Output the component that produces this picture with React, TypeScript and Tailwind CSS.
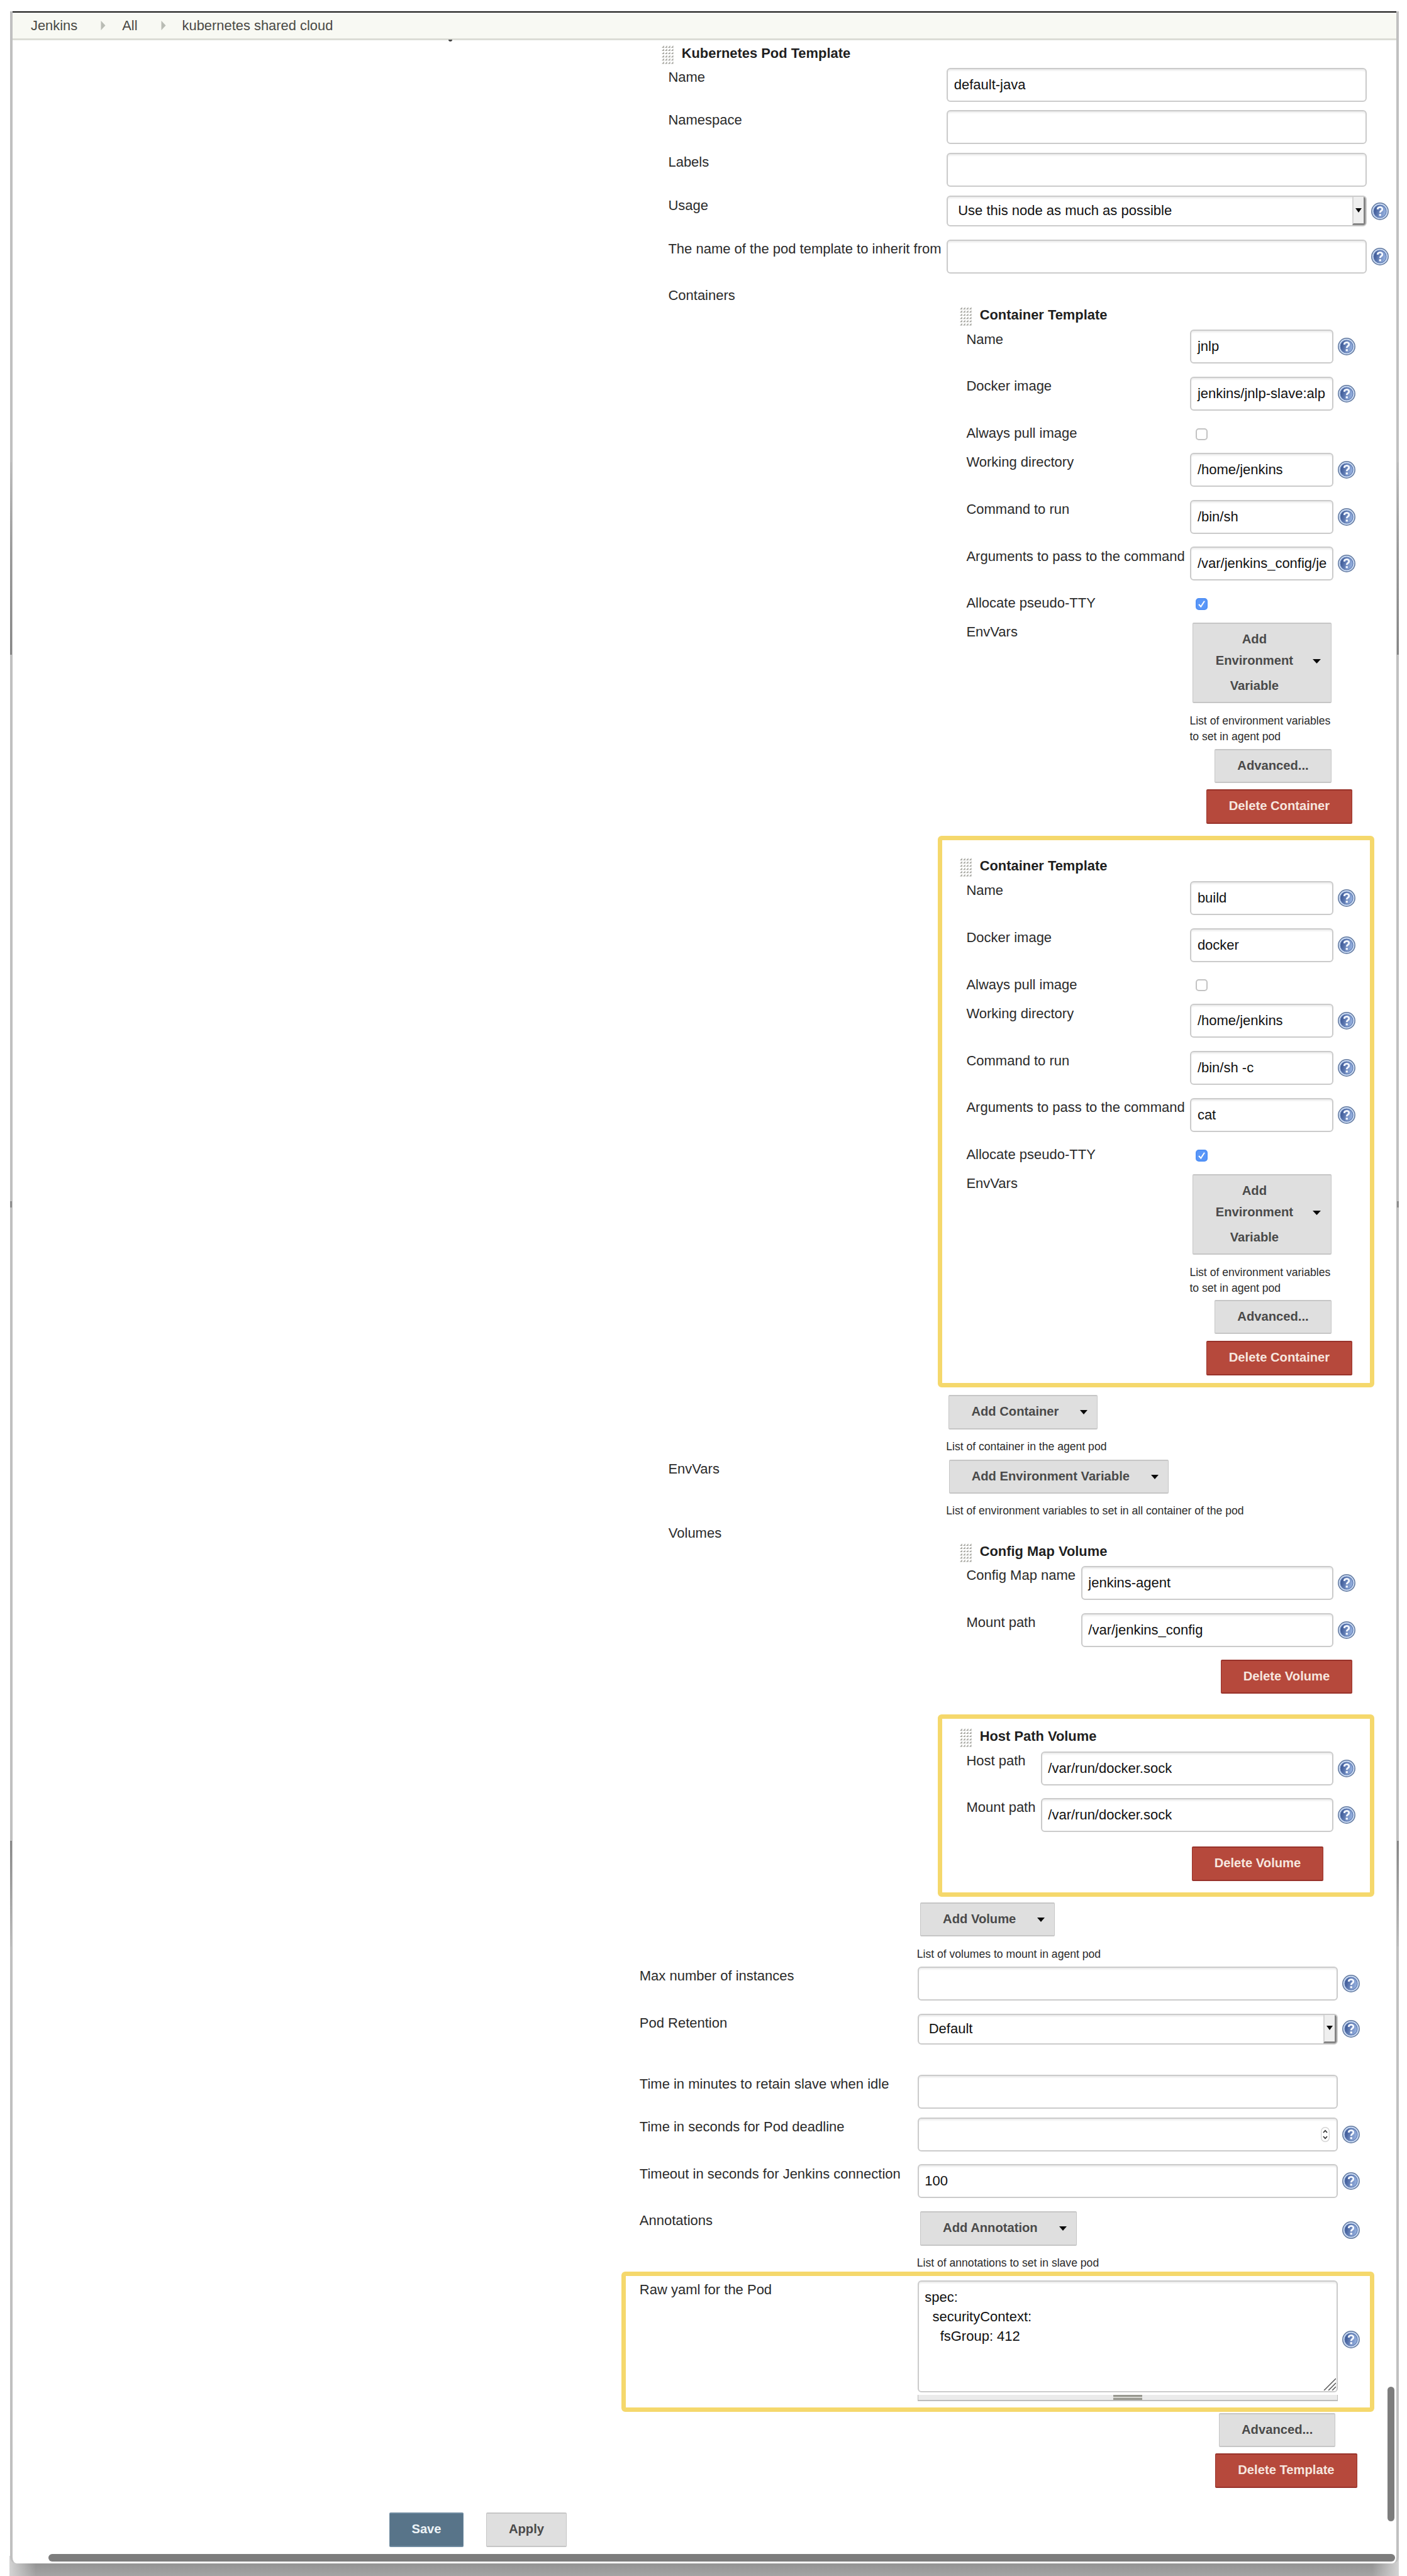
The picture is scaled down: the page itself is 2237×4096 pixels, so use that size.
import type { ReactNode } from "react";

function HelpIcon() {
  return (
    <svg viewBox="0 0 28 28" className="h-[28px] w-[28px] shrink-0">
      <defs>
        <linearGradient id="helpDisc" x1="0" y1="0" x2="1" y2="0.25">
          <stop offset="0.15" stopColor="#3f5b98" />
          <stop offset="1" stopColor="#93aedd" />
        </linearGradient>
      </defs>
      <circle cx="14" cy="14" r="13.2" fill="#c9daf3" stroke="#62799f" strokeWidth="1.5" />
      <circle cx="14" cy="14" r="10" fill="url(#helpDisc)" stroke="#5c78b0" strokeWidth="1.1" />
      <path
        d="M10.3 10.9 C10.4 6.4 17.8 6.3 17.8 10.4 C17.8 13.2 14.3 13.2 14.2 16.3"
        fill="none"
        stroke="#f3f7ff"
        strokeWidth="2.9"
      />
      <rect x="12.6" y="18.2" width="3.3" height="3.2" fill="#f3f7ff" />
    </svg>
  );
}

function Handle() {
  const cols = [0, 1, 2, 3];
  const rows = [0, 1, 2, 3, 4, 5];
  return (
    <svg viewBox="0 0 19 30" className="h-[30px] w-[19px] shrink-0">
      {rows.map((r) =>
        cols.map((c) => (
          <path
            key={`${r}-${c}`}
            d={`M${c * 4.9 + 0.1} ${r * 5.1 + 3.9} h3.7 v-3.7 z`}
            fill="#a3a39d"
          />
        ))
      )}
    </svg>
  );
}

function Title({ children }: { children: ReactNode }) {
  return (
    <div className="flex items-start">
      <Handle />
      <span className="ml-[12.7px] text-[21.9px] leading-[25px] font-bold text-[#1f1f1f]">{children}</span>
    </div>
  );
}

const inputStyle =
  "shrink-0 overflow-hidden whitespace-pre rounded-[6px] border-2 border-[#cbcbcb] bg-white px-[9.5px] text-[22px] leading-[49px] text-[#111] shadow-[inset_0_3px_3px_-1px_#e9e9e9]";

function TextInput({ value = "", width, children }: { value?: string; width: string; children?: ReactNode }) {
  return (
    <div className={`${inputStyle} relative h-[54px] ${width}`}>
      {value}
      {children}
    </div>
  );
}

function Select({ value }: { value: string }) {
  return (
    <div className={`${inputStyle} flex h-[49px] w-[668px] justify-between pr-0 pl-[16px]`}>
      <span className="leading-[43px]">{value}</span>
      <span className="flex h-[45px] w-[21px] items-center justify-center border-r-[3px] border-b-[3px] border-l-2 border-r-[#858585] border-b-[#858585] border-l-[#d5d5d5] bg-[#efefef]">
        <Arrow className="h-[7px] w-[10px]" />
      </span>
    </div>
  );
}

function Arrow({ className }: { className: string }) {
  return (
    <svg viewBox="0 0 12 7" preserveAspectRatio="none" className={`shrink-0 ${className}`}>
      <path d="M0 0 H12 L6 7 Z" fill="#0a0a0a" />
    </svg>
  );
}

function Button({
  kind = "gray",
  className,
  children,
}: {
  kind?: "gray" | "red" | "blue";
  className: string;
  children: ReactNode;
}) {
  const kinds = {
    gray: "border-[#c6c6c6] bg-[#dfdfdf] text-[#4a4a4a]",
    red: "border-[#98322a] bg-[#b6493c] text-[#f6e6df]",
    blue: "border-[#6f8ba0] bg-[#587489] text-[#eef4f8]",
  };
  return (
    <div
      className={`flex shrink-0 items-start rounded-[2px] border-2 border-x text-[20.2px] leading-[49px] font-bold whitespace-nowrap ${kinds[kind]} ${className}`}
    >
      {children}
    </div>
  );
}

function MenuButton({ className, children }: { className: string; children: ReactNode }) {
  return (
    <Button className={`justify-between pr-[15px] pl-[35px] ${className}`}>
      <span>{children}</span>
      <Arrow className="mt-[22px] h-[7px] w-[12px]" />
    </Button>
  );
}

function Row({
  label,
  height,
  labelWidth,
  help,
  helpClass = "mt-[13px] ml-[7px]",
  children,
}: {
  label: string;
  height: string;
  labelWidth: string;
  help?: boolean;
  helpClass?: string;
  children?: ReactNode;
}) {
  return (
    <div className={`flex items-start ${height}`}>
      <div
        className={`shrink-0 pt-[1.3px] -indent-[1.4px] text-[22px] leading-[28px] whitespace-nowrap text-[#2b2b2b] ${labelWidth}`}
      >
        {label}
      </div>
      {children}
      {help && (
        <div className={helpClass}>
          <HelpIcon />
        </div>
      )}
    </div>
  );
}

function Checkbox({ checked }: { checked?: boolean }) {
  return (
    <div
      className={`mt-[7px] ml-[8.5px] h-[19px] w-[19px] rounded-[5px] border-2 ${
        checked ? "border-[#4f8ff5] bg-[#5a97f8]" : "border-[#c3c3c3] bg-white"
      }`}
    >
      {checked && (
        <svg viewBox="0 0 15 15" className="h-[15px] w-[15px]">
          <path d="M3 8 L6.3 11.6 L12 2.8" fill="none" stroke="#fff" strokeWidth="2" />
        </svg>
      )}
    </div>
  );
}

const hint = "text-[17.6px] leading-[25px] whitespace-nowrap text-[#2b2b2b] relative -left-px top-px";

type Container = { name: string; image: string; command: string; args: string };

function ContainerTemplate({ data, highlighted }: { data: Container; highlighted?: boolean }) {
  const lw = "w-[354.6px]";
  const iw = "w-[228px]";
  return (
    <div
      className={`h-[876.7px] w-[694px] rounded-[6px] border-[7px] pt-[28px] pl-[27.6px] ${
        highlighted ? "border-[#f5d86c]" : "border-transparent"
      }`}
    >
      <Title>Container Template</Title>
      <div className="mt-[6.8px] ml-[11.8px]">
        <Row label="Name" height="h-[74.6px]" labelWidth={lw} help>
          <TextInput value={data.name} width={iw} />
        </Row>
        <Row label="Docker image" height="h-[74.6px]" labelWidth={lw} help>
          <TextInput value={data.image} width={iw} />
        </Row>
        <Row label="Always pull image" height="h-[46.2px]" labelWidth={lw}>
          <Checkbox />
        </Row>
        <Row label="Working directory" height="h-[74.8px]" labelWidth={lw} help>
          <TextInput value="/home/jenkins" width={iw} />
        </Row>
        <Row label="Command to run" height="h-[74.8px]" labelWidth={lw} help>
          <TextInput value={data.command} width={iw} />
        </Row>
        <Row label="Arguments to pass to the command" height="h-[74.5px]" labelWidth={lw} help>
          <TextInput value={data.args} width={iw} />
        </Row>
        <Row label="Allocate pseudo-TTY" height="h-[46.1px]" labelWidth={lw}>
          <Checkbox checked />
        </Row>
        <Row label="EnvVars" height="h-[200.6px]" labelWidth={lw}>
          <div>
            <Button className="ml-[4px] h-[128.5px] w-[221px] items-stretch pl-[34px]">
              <div className="flex w-[126px] flex-col text-center">
                <span className="mt-[5px] leading-[38px]">Add</span>
                <span className="leading-[30px]">Environment</span>
                <span className="leading-[50px]">Variable</span>
              </div>
              <Arrow className="mt-[56px] ml-[30px] h-[7px] w-[13px]" />
            </Button>
            <div className={`mt-[14.5px] ${hint}`}>
              List of environment variables
              <br />
              to set in agent pod
            </div>
          </div>
        </Row>
      </div>
      <Button className="ml-[405px] h-[54px] w-[186px] justify-center">Advanced...</Button>
      <Button kind="red" className="mt-[10.8px] ml-[392px] h-[54.5px] w-[232px] justify-center">
        Delete Container
      </Button>
    </div>
  );
}

const containers: Container[] = [
  { name: "jnlp", image: "jenkins/jnlp-slave:alp", command: "/bin/sh", args: "/var/jenkins_config/je" },
  { name: "build", image: "docker", command: "/bin/sh -c", args: "cat" },
];

function PodTemplateTop() {
  const lw = "w-[441.4px]";
  const fw = "w-[668px]";
  return (
    <div className="ml-[1032px] pt-[7.5px]">
      <Title>Kubernetes Pod Template</Title>
      <div className="mt-[6px] ml-[11.8px]">
        <Row label="Name" height="h-[67.8px]" labelWidth={lw}>
          <TextInput value="default-java" width={fw} />
        </Row>
        <Row label="Namespace" height="h-[67.8px]" labelWidth={lw}>
          <TextInput width={fw} />
        </Row>
        <Row label="Labels" height="h-[68.4px]" labelWidth={lw}>
          <TextInput width={fw} />
        </Row>
        <Row label="Usage" height="h-[69.5px]" labelWidth={lw} help helpClass="mt-[10.5px] ml-[6.5px]">
          <Select value="Use this node as much as possible" />
        </Row>
        <Row
          label="The name of the pod template to inherit from"
          height="h-[71.6px]"
          labelWidth={lw}
          help
          helpClass="mt-[13.5px] ml-[6.5px]"
        >
          <TextInput width={fw} />
        </Row>
        <div className="flex h-[1868.4px] items-start">
          <div className="w-[427.6px] shrink-0 pt-[3.3px] -indent-[1.4px] text-[22px] leading-[28px] text-[#2b2b2b]">
            Containers
          </div>
          <div>
            {containers.map((c, i) => (
              <ContainerTemplate key={c.name} data={c} highlighted={i === 1} />
            ))}
            <MenuButton className="mt-[12.5px] ml-[17px] h-[54.5px] w-[236.5px]">Add Container</MenuButton>
            <div className="mt-[14.5px] ml-[13.8px]">
              <div className={hint}>List of container in the agent pod</div>
            </div>
          </div>
        </div>
        <Row label="EnvVars" height="h-[101.8px]" labelWidth={lw}>
          <div>
            <MenuButton className="ml-[3.5px] h-[54px] w-[349px]">Add Environment Variable</MenuButton>
            <div className={`mt-[14.5px] ${hint}`}>List of environment variables to set in all container of the pod</div>
          </div>
        </Row>
        <div className="flex h-[593.2px] items-start">
          <div className="w-[427.6px] shrink-0 pt-[1.3px] -indent-[1px] text-[22px] leading-[28px] text-[#2b2b2b]">
            Volumes
          </div>
          <div className="mt-[9.2px] w-[694px] shrink-0">
            <div className="h-[294.3px] pt-[21.7px] pl-[34.6px]">
              <Title>Config Map Volume</Title>
              <div className="mt-[6.3px] ml-[11.8px]">
                <Row label="Config Map name" height="h-[74.7px]" labelWidth="w-[181px]" help>
                  <TextInput value="jenkins-agent" width="w-[401.6px]" />
                </Row>
                <Row label="Mount path" height="h-[74.7px]" labelWidth="w-[181px]" help>
                  <TextInput value="/var/jenkins_config" width="w-[401.6px]" />
                </Row>
              </div>
              <Button kind="red" className="ml-[415px] h-[54px] w-[209px] justify-center">
                Delete Volume
              </Button>
            </div>
            <div className="h-[289.7px] rounded-[6px] border-[7px] border-[#f5d86c] pt-[14.5px] pl-[27.6px]">
              <Title>Host Path Volume</Title>
              <div className="mt-[6.8px] ml-[11.8px]">
                <Row label="Host path" height="h-[74.5px]" labelWidth="w-[117px]" help>
                  <TextInput value="/var/run/docker.sock" width="w-[465.6px]" />
                </Row>
                <Row label="Mount path" height="h-[77px]" labelWidth="w-[117px]" help>
                  <TextInput value="/var/run/docker.sock" width="w-[465.6px]" />
                </Row>
              </div>
              <Button kind="red" className="ml-[369px] h-[54.5px] w-[209px] justify-center">
                Delete Volume
              </Button>
            </div>
          </div>
        </div>
      </div>
    </div>
  );
}

function PodTemplateBottom() {
  const lw = "w-[440.5px]";
  const fw = "w-[668.5px]";
  return (
    <div className="ml-[998.2px]">
      <div className="h-[111px] pt-[9px] pl-[440.5px]">
        <MenuButton className="ml-[4.4px] h-[54.5px] w-[214px]">Add Volume</MenuButton>
        <div className={`mt-[14.5px] ${hint}`}>List of volumes to mount in agent pod</div>
      </div>
      <Row label="Max number of instances" height="h-[74.6px]" labelWidth={lw} help>
        <TextInput width={fw} />
      </Row>
      <Row label="Pod Retention" height="h-[97px]" labelWidth={lw} help helpClass="mt-[10.5px] ml-[7px]">
        <Select value="Default" />
      </Row>
      <Row label="Time in minutes to retain slave when idle" height="h-[68.3px]" labelWidth={lw}>
        <TextInput width={fw} />
      </Row>
      <Row label="Time in seconds for Pod deadline" height="h-[74.5px]" labelWidth={lw} help>
        <TextInput width={fw}>
          <svg viewBox="0 0 14 24" className="absolute top-[13px] right-[11px] h-[24px] w-[14px]">
            <rect x="0.6" y="0.6" width="12.8" height="22.8" rx="6.4" fill="#fdfdfd" stroke="#d0d0d0" strokeWidth="1.2" />
            <path d="M4 9 L7 5.6 L10 9 M4 15 L7 18.4 L10 15" fill="none" stroke="#2d2d2d" strokeWidth="1.6" />
          </svg>
        </TextInput>
      </Row>
      <Row label="Timeout in seconds for Jenkins connection" height="h-[74.8px]" labelWidth={lw} help>
        <TextInput value="100" width={fw} />
      </Row>
      <Row
        label="Annotations"
        height="h-[96.1px]"
        labelWidth={lw}
        help
        helpClass="mt-[15.5px] ml-[7px]"
      >
        <div className="w-[668.5px] shrink-0">
          <MenuButton className="ml-[4.4px] h-[54.5px] w-[249px]">Add Annotation</MenuButton>
          <div className={`mt-[14.5px] ${hint}`}>List of annotations to set in slave pod</div>
        </div>
      </Row>
      <div className="-ml-[30px] h-[222.7px] w-[1196.6px] rounded-[6px] border-[7px] border-[#f5d86c] pt-[6.5px] pl-[23px]">
        <Row
          label="Raw yaml for the Pod"
          height="h-[200px]"
          labelWidth={lw}
          help
          helpClass="mt-[80.5px] ml-[7px]"
        >
          <div className="w-[668.5px] shrink-0">
            <div className={`${inputStyle} relative h-[178px] pt-[10.5px]`}>
              <div className="leading-[30.7px]">{"spec:\n  securityContext:\n    fsGroup: 412"}</div>
              <svg viewBox="0 0 20 20" className="absolute right-px bottom-px h-[20px] w-[20px]">
                <path d="M1 20 L20 1 M8 20 L20 8 M14 20 L20 14" stroke="#555" strokeWidth="1.5" />
              </svg>
            </div>
            <div className="mt-[4px] flex h-[10px] items-center justify-center border-x border-b-2 border-[#bcbcbc] bg-[#ebebeb]">
              <div className="h-[8px] w-[46px] border-y-[3px] border-[#989890] bg-[#d5d5d0]" />
            </div>
          </div>
        </Row>
      </div>
      <Button className="mt-[2.3px] ml-[920px] h-[53.5px] w-[185px] justify-center">Advanced...</Button>
      <Button kind="red" className="mt-[10px] ml-[913.5px] h-[55px] w-[226.5px] justify-center">
        Delete Template
      </Button>
    </div>
  );
}

function Chevron() {
  return (
    <svg viewBox="0 0 8 15" className="h-[15px] w-[8px]">
      <path d="M0.5 0 L7.5 7.5 L0.5 15 Z" fill="#b9bcb4" />
    </svg>
  );
}

function EdgeShade({ side }: { side: string }) {
  return (
    <div className={`absolute top-[18px] h-[4058px] w-[3px] ${side}`}>
      <div className="mt-[717px] h-[306px] bg-linear-to-b from-[#bcbcbc] via-[#989898] via-45% to-[#848484]" />
      <div className="mt-[869px] h-[10px] bg-[#8d8d8d]" />
      <div className="mt-[1007px] h-[168px] bg-linear-to-b from-[#858585] to-[#bcbcbc]" />
    </div>
  );
}

export default function App() {
  return (
    <div className="relative h-[4096px] w-[2237px] overflow-hidden bg-white pt-[18px] font-['Liberation_Sans',Arial,sans-serif]">
      <div className="relative z-10 ml-[16px] h-[4058px] w-[2208px] rounded-b-[10px] border-x-4 border-[#c0c0c0] bg-white">
        <header className="flex h-[46px] items-center border-t-2 border-b-[3px] border-t-[#151515] border-b-[#dcddd6] bg-[#f8f9f3] pl-[29px] text-[21.9px] leading-[38px] text-[#4a4a46]">
          <span>Jenkins</span>
          <span className="ml-[37px]">
            <Chevron />
          </span>
          <span className="ml-[26px]">All</span>
          <span className="ml-[37px]">
            <Chevron />
          </span>
          <span className="ml-[26px]">kubernetes shared cloud</span>
        </header>
        <div className="absolute top-[45px] left-[693px] h-[3px] w-[6px] rounded-b-full bg-[#444]" />
        <main>
          <PodTemplateTop />
          <PodTemplateBottom />
          <div className="mt-[39.5px] flex pl-[599px]">
            <Button kind="blue" className="h-[55px] w-[118px] justify-center">
              Save
            </Button>
            <Button className="ml-[36px] h-[55px] w-[128px] justify-center">Apply</Button>
          </div>
        </main>
        <div className="absolute top-[3777px] right-[3px] h-[214px] w-[11px] rounded-full bg-[#7d7d7d]" />
        <div className="absolute right-[2px] bottom-[3px] left-[57px] h-[12px] rounded-full bg-[#7d7d7d]" />
      </div>
      <div className="absolute bottom-0 left-[15px] h-[32px] w-[2209px] bg-linear-to-b from-[#8a8a8a] to-[#a4a4a4]">
        <div className="flex h-full justify-between">
          <div className="w-[42px] bg-linear-to-r from-[#d4d4d4] to-transparent" />
          <div className="w-[42px] bg-linear-to-l from-[#d4d4d4] to-transparent" />
        </div>
      </div>
      <div className="absolute top-0 left-0 z-20">
        <EdgeShade side="left-[16px]" />
        <EdgeShade side="left-[2221px]" />
      </div>
    </div>
  );
}
